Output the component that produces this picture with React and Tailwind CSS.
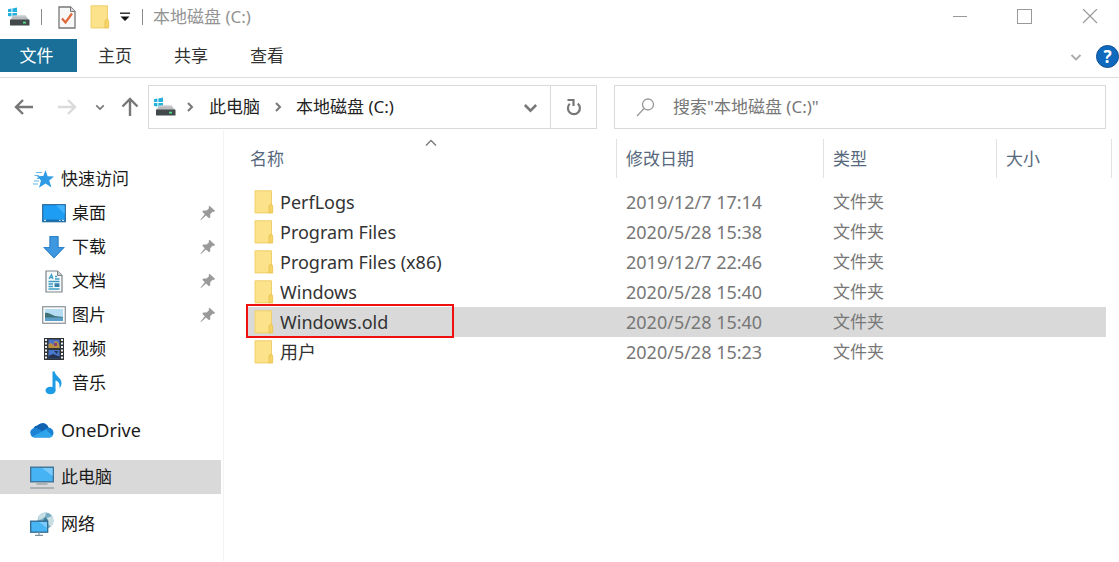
import React, { useState } from 'react';

const quickAccess = [
    { name: '桌面', icon: DesktopIcon, pinned: true },
    { name: '下载', icon: DownloadIcon, pinned: true },
    { name: '文档', icon: DocumentIcon, pinned: true },
    { name: '图片', icon: PictureIcon, pinned: true },
    { name: '视频', icon: VideoIcon, pinned: false },
    { name: '音乐', icon: MusicIcon, pinned: false },
];

const folders = [
    { name: 'PerfLogs', date: '2019/12/7 17:14' },
    { name: 'Program Files', date: '2020/5/28 15:38' },
    { name: 'Program Files (x86)', date: '2019/12/7 22:46' },
    { name: 'Windows', date: '2020/5/28 15:40' },
    { name: 'Windows.old', date: '2020/5/28 15:40', marked: true },
    { name: '用户', date: '2020/5/28 15:23' },
];

function DriveIcon() {
    return (
        <svg width="23" height="20" viewBox="0 0 23 20" className="shrink-0">
            <path d="M1 2.2 4.4 1.6V5H1zM5.4 1.4 10 .6V5H5.400zM1 6H4.400V9.400L1 8.900zM5.400 6H10V10L5.400 9.500z" fill="#22b0dc" />
            <path d="M6.500 8.500H18.500L22 13H3z" fill="#b9bdbf" />
            <path d="M6.500 8.500H18.500L19.200 9.500H5.600z" fill="#d4d6d7" />
            <rect x="3" y="12.500" width="19.500" height="6" rx="0.600" fill="#43484a" />
            <rect x="16" y="14.700" width="3" height="1.800" fill="#4fe08a" />
        </svg>
    );
}

function FolderIcon() {
    return (
        <svg width="20" height="24" viewBox="0 0 20 24" className="shrink-0">
            <path d="M1 .8H17.500V14.500L18.500 16V23.200H1z" fill="#fce28a" />
            <path d="M1 .8H17.500V14.500" fill="none" stroke="#efcf6c" />
            <path d="M1 .8V22.800H15" fill="none" stroke="#f0d06c" />
            <path d="M15 23V16L16.500 14H17.500L18.700 16V23z" fill="#f6d365" stroke="#e6bf4c" strokeWidth="0.700" />
        </svg>
    );
}

function PropertiesIcon() {
    return (
        <svg width="18" height="23" viewBox="0 0 18 23">
            <path d="M1 1H12.500L17 5.500V22H1z" fill="#f8f8f8" stroke="#777" strokeWidth="1.300" />
            <path d="M12.500 1V5.500H17" fill="#ddd" stroke="#777" />
            <path d="M4 12.500 7.500 16.500 14 7.500" fill="none" stroke="#e0673a" strokeWidth="2.200" />
        </svg>
    );
}

function StarIcon() {
    return (
        <svg width="22" height="20" viewBox="0 0 22 20">
            <path d="M12.500 1 14.600 7.200 21 7.400 16.200 11.400 18.500 18.500 12.500 14.500 6 18.800 8 11.600 5 8.500 4 7.200 10.300 7z" fill="#2d9be5" />
            <path d="M3 3.500H9M1.500 6.500H6M1 12H6M0 15H5M4 9.500H7" stroke="#63b7ec" strokeWidth="1.200" />
        </svg>
    );
}

function DesktopIcon() {
    return (
        <svg width="24" height="19" viewBox="0 0 24 19">
            <rect x="0.700" y="0.700" width="22.600" height="17" fill="#1e9df5" stroke="#24689c" strokeWidth="1.200" />
            <path d="M14 1.300H22.700V10z" fill="#43b2fb" />
            <path d="M1.300 15.500H22.700V17.200H1.300z" fill="#1471b3" />
            <path d="M2 16.300H4M17 16.300H18.500M20 16.300H22" stroke="#fff" />
        </svg>
    );
}

function DownloadIcon() {
    return (
        <svg width="24" height="24" viewBox="0 0 24 24">
            <path d="M7.500 1H16.500V12H23L12 23.500 1 12H7.500z" fill="#3f97df" />
            <path d="M8 1.500H16V12.500H21.800L12 22.800 2.200 12.500H8z" fill="none" stroke="#2c82c9" />
        </svg>
    );
}

function DocumentIcon() {
    return (
        <svg width="18" height="23" viewBox="0 0 18 23">
            <path d="M1 1H12.500L17 5.500V22H1z" fill="#f7f9fa" stroke="#7c858a" strokeWidth="1.200" />
            <path d="M12.500 1V5.500H17" fill="#ccc" stroke="#7c858a" />
            <path d="M4 9 6.500 4.500 8 9M5 7.500H8M10 6.500H12M10 9H14.500M3.500 11.500H14.500M3.500 14H8M3.500 16.500H8M3.500 19H14.500" fill="none" stroke="#3d9fc6" strokeWidth="1.300" />
            <rect x="9.500" y="13.300" width="5" height="3.700" fill="#3481ad" />
        </svg>
    );
}

function PictureIcon() {
    return (
        <svg width="24" height="18" viewBox="0 0 24 18">
            <rect x="0.700" y="0.700" width="22.600" height="16.600" fill="#fafafa" stroke="#8b9499" strokeWidth="1.200" />
            <rect x="3" y="3" width="18" height="12" fill="#b4dcf3" />
            <path d="M3 7C7 6 9 9 13 10L21 11V12H3z" fill="#3f7276" />
            <path d="M3 11.500H21V15H3z" fill="#5c9fc8" />
        </svg>
    );
}

function VideoIcon() {
    return (
        <svg width="20" height="22" viewBox="0 0 20 22">
            <rect width="20" height="22" fill="#303336" />
            <path d="M2 1V22M18 1V22" stroke="#eceff0" strokeWidth="2" strokeDasharray="2 1.500" />
            <rect x="4.500" y="1.500" width="11" height="8.500" fill="#4c73c4" />
            <rect x="4.500" y="12" width="11" height="8.500" fill="#4978cf" />
            <path d="M4.500 10V6L7 5 9 7 11 3 14 4 15.500 8V10z" fill="#b9903f" />
            <path d="M10 5H13V8H10z" fill="#86417e" />
            <path d="M4.500 20.500V18L9 16 15.500 18.500V20.500zM10 13H14L13 16z" fill="#25334e" />
        </svg>
    );
}

function MusicIcon() {
    return (
        <svg width="18" height="24" viewBox="0 0 18 24">
            <ellipse cx="5.500" cy="19.500" rx="5" ry="3.800" fill="#1d9be4" />
            <path d="M7.500 0.500H9.800C10 5 16.500 6.500 16.500 12 16.500 14.500 15.500 16 14.500 17 15 12 13 10 10.500 9.500V19.500H7.500z" fill="#1d9be4" />
        </svg>
    );
}

function CloudIcon() {
    return (
        <svg width="24" height="16" viewBox="0 0 24 16">
            <path d="M5 15.500A4.800 4.800 0 0 1 3.500 6.200 5 5 0 0 1 7.500 3.500 6.500 6.500 0 0 1 18.500 5.500C21.500 6 23.700 8 23.500 11 23.500 13.500 21.500 15.500 19 15.500z" fill="#1b82d4" />
            <path d="M7.500 3.500A6.500 6.500 0 0 1 18.500 5.500L16 6.500 12.500 9 6.500 5.700 3.500 6.200A5 5 0 0 1 7.500 3.500z" fill="#1162b0" />
            <path d="M2.500 14.500 16 7.500 22.500 14C21.500 15 20 15.500 19 15.500H5C4 15.500 3 15 2.500 14.500z" fill="#2fa5ec" />
        </svg>
    );
}

function ComputerIcon() {
    return (
        <svg width="24" height="23" viewBox="0 0 24 23">
            <rect x="0.700" y="1.200" width="22.600" height="14.600" fill="#45b3f4" stroke="#3b6f92" strokeWidth="1.300" />
            <path d="M12 2H22.600V10z" fill="#78cafa" />
            <path d="M6.500 18H17.500" stroke="#8e989e" strokeWidth="1.200" />
            <path d="M0 22H24" stroke="#8e989e" strokeWidth="1.200" />
        </svg>
    );
}

function NetworkIcon() {
    return (
        <svg width="24" height="24" viewBox="0 0 24 24">
            <circle cx="15.500" cy="8.500" r="8" fill="#78abc4" />
            <path d="M9 4C11 1 14 0.500 16 1L15 5 11 7.500 8 8zM17 6 22 4C24 8 24 12 21 15L18 12z" fill="#c7dfe3" />
            <path d="M15 5 18 8 17 12 13 9z" fill="#3f8098" />
            <rect x="0.700" y="9.200" width="17" height="11" fill="#48b6f5" stroke="#32698e" strokeWidth="1.300" />
            <path d="M9 10H17V16z" fill="#7ccbfa" />
            <path d="M9 20V23M5 23.300H13" stroke="#7c909b" strokeWidth="1.200" />
        </svg>
    );
}

function PinIcon() {
    return (
        <svg width="16" height="16" viewBox="0 0 16 16">
            <path d="M9.500 0.800 15.200 6 13.500 7 12.500 6.800 10.200 9.300 10.300 12.200 9 13.300 6 10.500 1 15 0.500 14.600 4.800 9.300 2.300 6.800 3.300 5.600 6.500 5.600 9 3.200 8.700 1.800z" fill="#9a9a9a" />
        </svg>
    );
}

function Chevron({ d, size = 12, color = '#777', width = 2 }) {
    return (
        <svg width={size} height={size} viewBox="0 0 12 12" fill="none" stroke={color} strokeWidth={width} className="shrink-0">
            <path d={d} />
        </svg>
    );
}

const DOWN = 'M1.500 4 6 8.500 10.500 4';
const RIGHT = 'M4 2 8 6 4 10';
const UP = 'M1 8.500 6 3.500 11 8.500';

function Arrow({ color, up }) {
    return (
        <svg width="20" height="20" viewBox="0 0 20 20" fill="none" stroke={color} strokeWidth="2.400">
            {up ? <path d="M10 19V2M2.500 9.500 10 2 17.500 9.500" /> : <path d="M19 10H2M9 3 2 10 9 17" />}
        </svg>
    );
}

const TitleBar = () => (
    <header className="flex h-[34px] items-center pl-[7px] pr-[21px]">
        <DriveIcon />
        <span className="ml-[11px] h-4 w-px bg-[#8c8c8c]" />
        <button aria-label="属性" className="ml-4"><PropertiesIcon /></button>
        <button aria-label="新建文件夹" className="ml-[14px]"><FolderIcon /></button>
        <button aria-label="自定义快速访问工具栏" className="ml-[9px]">
            <svg width="12" height="10" viewBox="0 0 12 10">
                <path d="M1 1.200H11" stroke="#222" strokeWidth="1.400" />
                <path d="M1.500 4.500H10.500L6 9z" fill="#111" />
            </svg>
        </button>
        <span className="ml-[11px] h-4 w-px bg-[#8c8c8c]" />
        <h1 className="ml-[10px] text-[#939393]">本地磁盘 (C:)</h1>
        <div className="ml-auto flex gap-[49px]">
            <button aria-label="最小化">
                <svg width="16" height="16" fill="none" stroke="#999"><path d="M1 7.500H15" /></svg>
            </button>
            <button aria-label="最大化">
                <svg width="16" height="16" fill="none" stroke="#999"><rect x="0.500" y="0.500" width="14" height="14" /></svg>
            </button>
            <button aria-label="关闭">
                <svg width="16" height="16" fill="none" stroke="#999" strokeWidth="1.200"><path d="M1 0 15 14M15 0 1 14" /></svg>
            </button>
        </div>
    </header>
);

const Ribbon = () => (
    <nav className="flex h-11 border-b border-[#dcdcdc] pt-[5px]">
        <button className="h-[33px] w-[77px] bg-[#1a6f98] pr-1 text-white">文件</button>
        {['主页', '共享', '查看'].map((tab) => (
            <button key={tab} className="h-[33px] w-[76px] text-[#333]">{tab}</button>
        ))}
        <div className="ml-auto flex h-[35px] items-center gap-[14px]">
            <button aria-label="展开功能区"><Chevron d={DOWN} color="#aaa" width={1.8} /></button>
            <button aria-label="帮助" className="h-[23px] w-[23px] rounded-full border border-[#0d4f94] bg-[#0f69bd] text-[17px] leading-5 font-bold text-white">?</button>
        </div>
    </nav>
);

const AddressRow = () => {
    const [query, setQuery] = useState('');

    return (
        <div className="flex h-[52px] items-center pt-[6px] pr-[13px]">
            <div className="flex w-[148px] shrink-0 items-center pl-[14px]">
                <button aria-label="后退"><Arrow color="#777" /></button>
                <button aria-label="前进" className="ml-[23px] rotate-180"><Arrow color="#dadada" /></button>
                <button aria-label="最近位置" className="ml-[18px]"><Chevron d={DOWN} size={10} /></button>
                <button aria-label="上移" className="ml-[15px]"><Arrow color="#777" up /></button>
            </div>
            <div className="grid flex-1 grid-cols-[449fr_492fr] gap-[17px]">
                <div className="flex h-11 items-center border border-[#d9d9d9] pl-1">
                    <DriveIcon />
                    <span className="ml-2"><Chevron d={RIGHT} /></span>
                    <button className="ml-[13px] text-[#222]">此电脑</button>
                    <span className="ml-3"><Chevron d={RIGHT} /></span>
                    <button className="ml-3 text-[#222]">本地磁盘 (C:)</button>
                    <button aria-label="历史记录" className="mr-3 ml-auto"><Chevron d={DOWN} size={15} /></button>
                    <button aria-label="刷新" className="flex h-full w-[46px] items-center justify-center border-l border-[#d9d9d9]">
                        <svg width="16" height="18" viewBox="0 0 16 18" fill="none" stroke="#777" strokeWidth="2.200">
                            <path d="M3.800 5.800A6 6 0 1 0 11.800 5.600" />
                            <path d="M1.500 2H7.500V8" />
                        </svg>
                    </button>
                </div>
                <label className="flex h-11 items-center border border-[#d9d9d9] pl-[21px]">
                    <svg width="19" height="19" viewBox="0 0 19 19" fill="none" stroke="#999" strokeWidth="1.300" className="shrink-0">
                        <circle cx="12" cy="6.500" r="5.500" />
                        <path d="M8 10.500 1 18" />
                    </svg>
                    <input
                        type="text"
                        aria-label="搜索"
                        value={query}
                        onChange={(e) => setQuery(e.target.value)}
                        placeholder={'搜索"本地磁盘 (C:)"'}
                        className="ml-[18px] min-w-0 flex-1 outline-none placeholder:text-[#777]"
                    />
                </label>
            </div>
        </div>
    );
};

const Sidebar = () => (
    <aside className="flex w-[224px] shrink-0 flex-col gap-[13px] border-r border-[#f3f3f3] pt-8 pr-[2px] pb-5 text-[#1a1a1a]">
        <div>
            <a href="#quick" className="flex h-[34px] items-center pl-[33px]">
                <span className="w-7"><StarIcon /></span>快速访问
            </a>
            {quickAccess.map(({ name, icon: Icon, pinned }) => (
                <a key={name} href="#folder" className="flex h-[34px] items-center pr-[5px] pl-[41px]">
                    <span className="mr-[6px] flex w-[25px] justify-center"><Icon /></span>
                    {name}
                    {pinned && <span className="ml-auto"><PinIcon /></span>}
                </a>
            ))}
        </div>
        <a href="#onedrive" className="flex h-[34px] items-center gap-[7px] pl-[30px] text-lg"><CloudIcon />OneDrive</a>
        <a href="#pc" className="flex h-[34px] items-center gap-[7px] bg-[#d9d9d9] pl-[30px]"><ComputerIcon />此电脑</a>
        <a href="#network" className="flex h-[34px] items-center gap-[7px] pl-[30px]"><NetworkIcon />网络</a>
    </aside>
);

const HeaderCell = ({ children, first, span }) => (
    <th colSpan={span} className="h-12 p-0 align-top font-normal">
        <div className={`relative flex h-[39px] items-center border-r border-[#e2e2e2] text-[#56687c] ${first ? 'pl-1' : 'pl-[9px]'}`}>
            {children}
            {first && (
                <span className="absolute inset-x-0 -top-[2px] flex justify-center">
                    <Chevron d={UP} width={1.3} />
                </span>
            )}
        </div>
    </th>
);

const FileList = () => (
    <main className="min-w-0 flex-1 pt-[9px] pr-[7px] pl-[22px]">
        <table className="w-full table-fixed border-collapse text-left">
            <colgroup>
                <col className="w-[371px]" />
                <col className="w-[207px]" />
                <col className="w-[173px]" />
                <col />
                <col className="w-[6px]" />
            </colgroup>
            <thead>
                <tr>
                    <HeaderCell first>名称</HeaderCell>
                    <HeaderCell>修改日期</HeaderCell>
                    <HeaderCell>类型</HeaderCell>
                    <HeaderCell span={2}>大小</HeaderCell>
                </tr>
            </thead>
            <tbody>
                {folders.map((f) => (
                    <tr key={f.name} className={`h-[30px] text-[#777] ${f.marked ? '[&>td:not(:last-child)]:bg-[#d9d9d9]' : ''}`}>
                        <td className="relative p-0 pl-2">
                            <div className="flex items-center gap-[6px] text-lg leading-6 text-[#333]">
                                <FolderIcon />
                                {f.name}
                            </div>
                            {f.marked && <div className="absolute -top-[3px] left-0 h-[34px] w-[208px] border-2 border-[#f00f0f]" />}
                        </td>
                        <td className="p-0 pl-[9px] text-lg leading-6">{f.date}</td>
                        <td className="p-0 pl-[9px]">文件夹</td>
                        <td className="p-0" />
                        <td className="p-0" />
                    </tr>
                ))}
            </tbody>
        </table>
    </main>
);

export default function App() {
    return (
        <div className="min-h-screen bg-white font-['Noto_Sans','Noto_Sans_CJK_SC',sans-serif] text-[17px] leading-6">
            <TitleBar />
            <Ribbon />
            <AddressRow />
            <div className="flex">
                <Sidebar />
                <FileList />
            </div>
        </div>
    );
}
